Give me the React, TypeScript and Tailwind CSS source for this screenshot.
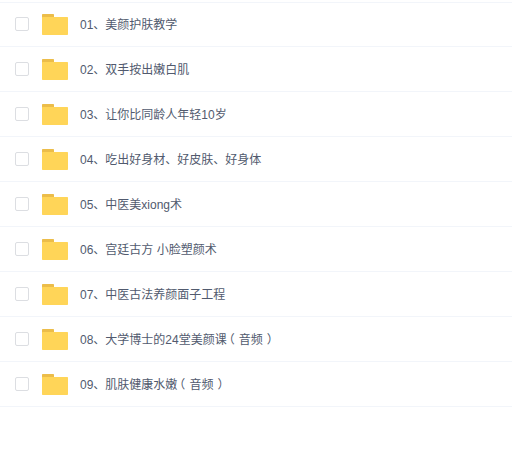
import React from 'react';

// fullwidth parens sit centred in their cell in the reference
const Audio: React.FC = () => (
  <>
    <span className="inline-block -translate-x-[4px]">（</span>音频<span className="inline-block translate-x-[4px]">）</span>
  </>
);

const folders: React.ReactNode[] = [
  '01、美颜护肤教学',
  '02、双手按出嫩白肌',
  '03、让你比同龄人年轻10岁',
  '04、吃出好身材、好皮肤、好身体',
  '05、中医美xiong术',
  '06、宫廷古方 小脸塑颜术',
  '07、中医古法养颜面子工程',
  <>
    08、大学博士的24堂美颜课
    <Audio />
  </>,
  <>
    09、肌肤健康水嫩
    <Audio />
  </>,
];

const FolderIcon: React.FC = () => (
  <svg width="26" height="21" viewBox="0 0 26 21" className="block">
    <path d="M0 1C0 .4.4 0 1 0h10c.6 0 1 .4 1 1v3H0z" fill="#ecbd4a" />
    <path d="M0 4c0-.6.4-1 1-1h24c.6 0 1 .4 1 1v16c0 .6-.4 1-1 1H1c-.6 0-1-.4-1-1z" fill="#ffd558" />
  </svg>
);

export default function App() {
  return (
    <div className="h-[456px] w-[512px] overflow-hidden bg-white pt-[2px] font-['Liberation_Sans','Noto_Sans_CJK_SC',sans-serif]">
      <div className="-mb-px h-px bg-[#f2f5fa]" />
      {folders.map((name, i) => (
        <div key={i} className="flex h-[45px] items-center border-b border-[#f2f5fa] pl-[15px]">
          <span className="h-[14px] w-[14px] shrink-0 rounded-[2px] border border-[#dcdee2] bg-white" />
          <span className="mt-[1px] ml-[13px] shrink-0">
            <FolderIcon />
          </span>
          <span className="mt-[2px] ml-[12px] text-[12px] text-[#515a6e]">{name}</span>
        </div>
      ))}
    </div>
  );
}
